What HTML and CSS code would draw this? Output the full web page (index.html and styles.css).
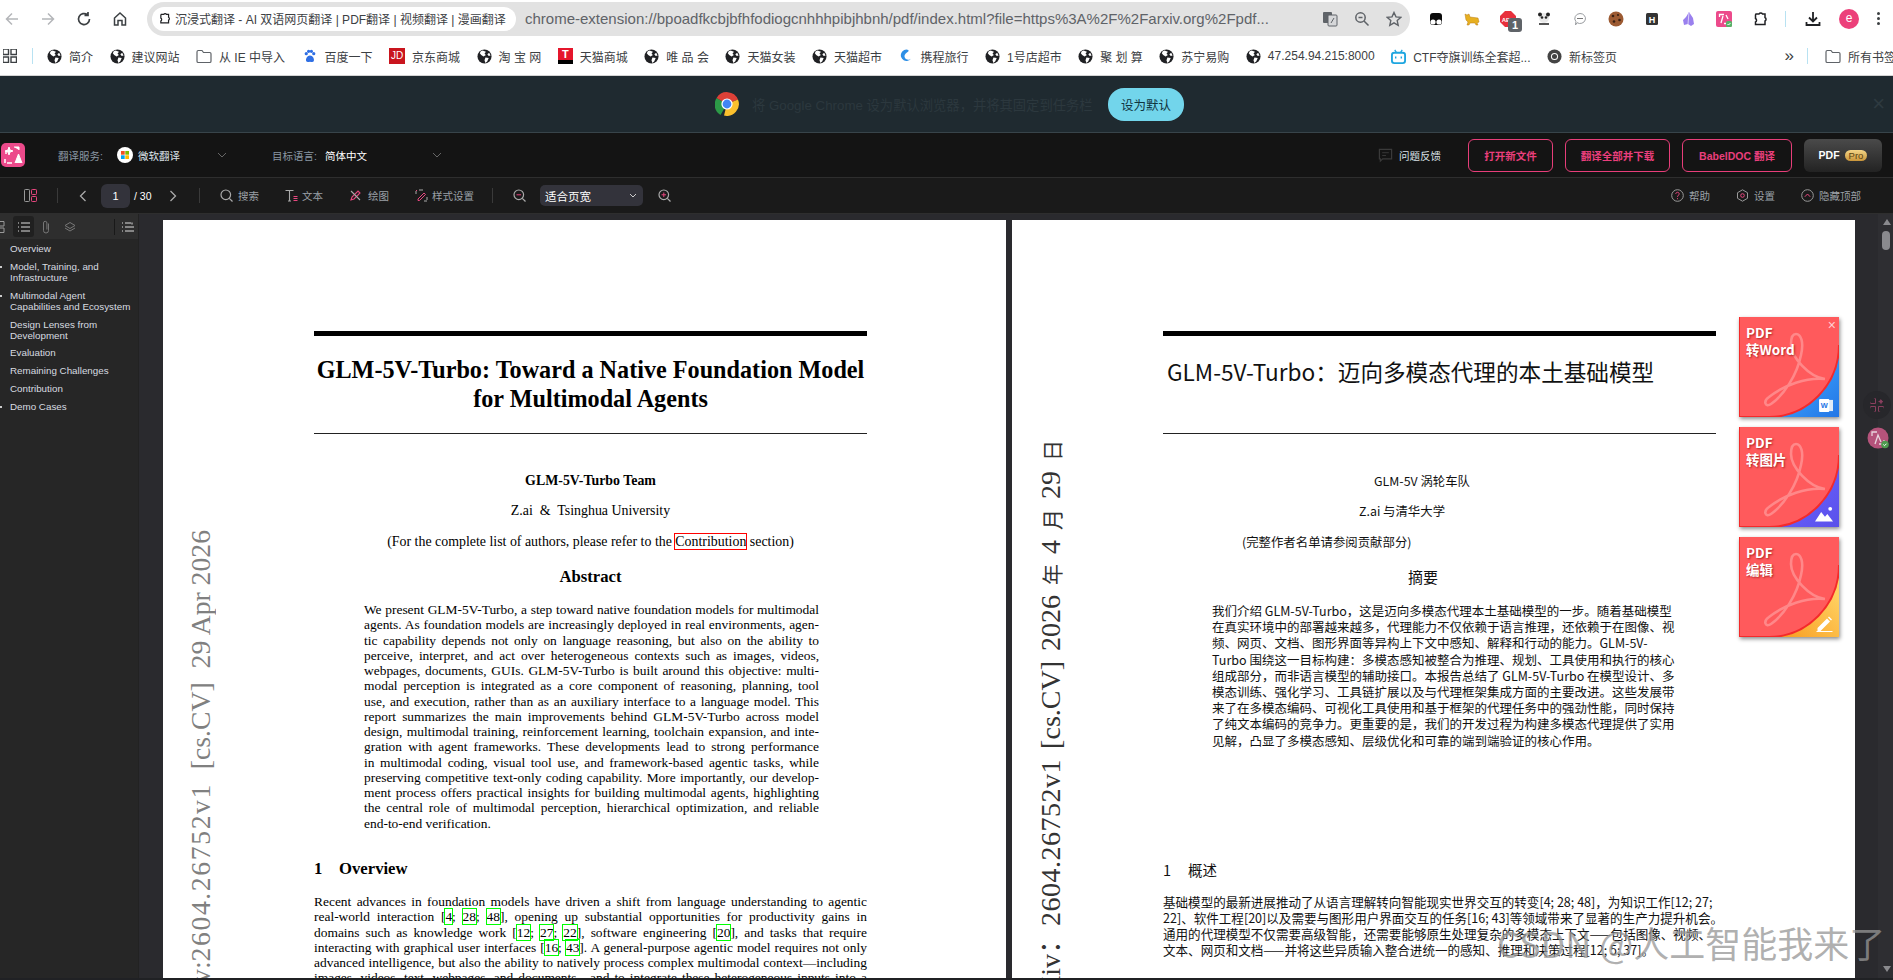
FILE: index.html
```html
<!DOCTYPE html>
<html lang="en">

<head>
    <meta charset="UTF-8">
    <title>沉浸式翻译 - PDF</title>
    <link rel="stylesheet" href="styles.css">
</head>

<body>
    <svg class="defs" width="0" height="0">
        <symbol id="globe" viewBox="0 0 16 16">
            <circle cx="8" cy="8" r="7.5" fill="#202124"/>
            <path d="M6 1.5 9.5 3 8 5 9.5 6.5 7 8 4.500 6.500 3 4.500 4 2.500zM9 9l3.500.5L11 13l-2 2-1-3zM13 4l1.500 3-2 .5-1.500-2z" fill="#fff"/>
        </symbol>
        <symbol id="folder" viewBox="0 0 16 14">
            <path d="M1 2.500C1 1.700 1.500 1 2.300 1H6l1.500 2h6.200c.8 0 1.300.6 1.300 1.300v7.400c0 .8-.5 1.300-1.300 1.300H2.300C1.500 13 1 12.500 1 11.700z" fill="none" stroke="#5f6368" stroke-width="1.200"/>
        </symbol>
        <symbol id="puzzle" viewBox="0 0 16 16">
            <path d="M4 3h3a2 2 0 0 1 3.500 0H13v3.500a2 2 0 0 1 0 3.500V13.500H3.500V11a2 2 0 0 0 0-3.500V4z" fill="none" stroke="#202124" stroke-width="1.500"/>
        </symbol>
        <symbol id="acrobat" viewBox="0 0 100 100">
            <path d="M57 17C62 17 65 25 62 38 58 58 45 78 32 87 26 91 24 84 30 80 45 68 68 60 86 62 70 60 52 40 52 27 52 20 54 17 57 17Z" fill="none" stroke="#fff" stroke-opacity=".28" stroke-width="2.600"/>
        </symbol>
        <symbol id="lobe" viewBox="0 0 100 100">
            <path d="M0 0H100V28C100 68 68 100 30 100H0Z" fill="#ff5a5c"/>
            <path d="M100 28C100 68 68 100 30 100H0V0" fill="none" stroke="#f42a2a" stroke-width="2"/>
        </symbol>
    </svg>

    <div class="tabbar">
        <svg class="nav-ico" viewBox="0 0 16 16"><path d="M14 8H2.500M8 2.500 2.500 8 8 13.500" fill="none" stroke="#b4b6b9" stroke-width="1.500"/></svg>
        <svg class="nav-ico nav-next" viewBox="0 0 16 16"><path d="M2 8h11.500M8 2.500 13.500 8 8 13.500" fill="none" stroke="#b4b6b9" stroke-width="1.500"/></svg>
        <svg class="nav-ico nav-next" viewBox="0 0 16 16"><path d="M13.500 8A5.500 5.500 0 1 1 11.500 3.800M12 1v3.500H8.500" fill="none" stroke="#3c4043" stroke-width="1.700"/></svg>
        <svg class="nav-ico nav-next" viewBox="0 0 16 16"><path d="M2.500 14V7L8 2l5.500 5v7H10V9.500H6V14z" fill="none" stroke="#3c4043" stroke-width="1.500"/></svg>
        <div class="omnibox">
            <div class="site-chip">
                <svg class="chip-ico"><use href="#puzzle"/></svg>
                <span>沉浸式翻译 - AI 双语网页翻译 | PDF翻译 | 视频翻译 | 漫画翻译</span>
            </div>
            <span class="url">chrome-extension://bpoadfkcbjbfhfodiogcnhhhpibjhbnh/pdf/index.html?file=https%3A%2F%2Farxiv.org%2Fpdf...</span>
            <div class="omni-icons">
                <svg viewBox="0 0 16 16"><rect x="1" y="1" width="9" height="11" rx="1" fill="#5f6368"/><rect x="6" y="4" width="9" height="11" rx="1" fill="#d6d7d9" stroke="#5f6368"/><path d="M9 12l3-5" stroke="#5f6368"/></svg>
                <svg viewBox="0 0 16 16"><circle cx="6.500" cy="6.500" r="4.700" fill="none" stroke="#5f6368" stroke-width="1.500"/><path d="M10 10l4.500 4.500M4.500 6.500h4" stroke="#5f6368" stroke-width="1.500"/></svg>
                <svg viewBox="0 0 16 16"><path d="M8 1.500l2 4.400 4.700.5-3.500 3.200 1 4.700L8 11.900l-4.200 2.400 1-4.700L1.300 6.400 6 5.900z" fill="none" stroke="#5f6368" stroke-width="1.400"/></svg>
            </div>
        </div>
        <div class="ext-row">
            <svg viewBox="0 0 16 16"><path d="M2 5c0-2 1-3 3-3h6c2 0 3 1 3 3v6c0 2-1 3-3 3H5c-2 0-3-1-3-3z" fill="#0b0b0b"/><circle cx="5" cy="11" r="2.600" fill="#fff"/><circle cx="11" cy="11" r="2.600" fill="#fff"/></svg>
            <svg viewBox="0 0 16 16"><path d="M1 3l2 1 2-1 1 3 8 1 1 4-2 1 1 2h-2l-1-2H6l-1 2H3l1-3-2-2z" fill="#e7b021" stroke="#b97a12" stroke-width=".5"/></svg>
            <span class="ext-abp">
                <svg viewBox="0 0 16 16"><path d="M5 0h6l5 5v6l-5 5H5l-5-5V5z" fill="#e8303c"/><text x="8" y="10.500" font-size="6" font-weight="700" text-anchor="middle" fill="#fff" font-family="Liberation Sans">ABP</text></svg>
                <span class="ext-badge">1</span>
            </span>
            <svg viewBox="0 0 16 16"><circle cx="8" cy="7" r="5" fill="#e8e8e8"/><circle cx="4" cy="3.500" r="2" fill="#222"/><circle cx="12" cy="3.500" r="2" fill="#222"/><circle cx="6" cy="6.500" r="1.300" fill="#222"/><circle cx="10" cy="6.500" r="1.300" fill="#222"/><rect x="3" y="12" width="10" height="2" fill="#555"/></svg>
            <svg viewBox="0 0 16 16"><path d="M8 2.500a5.500 5 0 1 1-3 9.200L3.500 14l.4-3.500A5.500 5 0 0 1 8 2.500z" fill="none" stroke="#9a9da1"/><path d="M5 7.500h6" stroke="#777"/></svg>
            <svg viewBox="0 0 16 16"><circle cx="8" cy="8" r="7.500" fill="#9c5a32"/><circle cx="5" cy="5" r="1.300" fill="#3a2012"/><circle cx="10" cy="4" r="1.100" fill="#3a2012"/><circle cx="11.500" cy="9" r="1.300" fill="#3a2012"/><circle cx="6" cy="10.500" r="1.300" fill="#3a2012"/></svg>
            <svg viewBox="0 0 16 16"><rect x="2" y="2" width="12" height="12" rx="1.500" fill="#333"/><text x="8" y="11.500" font-size="9" font-weight="700" text-anchor="middle" fill="#fff" font-family="Liberation Sans">H</text></svg>
            <svg viewBox="0 0 16 16"><path d="M9 1l4 6 1 6-3 2-3-2-4 1-1-5 3-3z" fill="#9a80ee"/><path d="M9 1 8 13" stroke="#d9d0fa"/></svg>
            <span class="ext-imt">
                <svg viewBox="0 0 16 16"><rect width="16" height="16" rx="2" fill="#ec4a8b"/><path d="M3.500 6V3.500H8M12.500 10v2.500H8M5 12l2-7M10 4l2 4" fill="none" stroke="#fff" stroke-width="1.300"/><rect x="10" y="10" width="6" height="6" rx="1.500" fill="#58b368"/><path d="M11.500 13l1 1 2-2" fill="none" stroke="#fff"/></svg>
            </span>
            <svg viewBox="0 0 16 16"><use href="#puzzle"/></svg>
            <i class="ext-sep"></i>
            <svg viewBox="0 0 16 16"><path d="M8 1v9M4 6.500 8 10.500 12 6.500M1.500 11v3h13v-3" fill="none" stroke="#202124" stroke-width="1.800"/></svg>
            <span class="avatar">e</span>
            <span class="dots"><i></i><i></i><i></i></span>
        </div>
    </div>

    <div class="bookmarks">
        <svg class="bm-apps" viewBox="0 0 14 14"><path d="M0 0h5.500v5.500H0zM8 0h5.500v5.500H8zM0 8h5.500v5.500H0zM8 8h5.500v5.500H8z" fill="none" stroke="#3c4043" stroke-width="1.400"/></svg>
        <i class="bm-sep"></i>
        <a class="bm"><svg><use href="#globe"/></svg>简介</a>
        <a class="bm"><svg><use href="#globe"/></svg>建议网站</a>
        <a class="bm"><svg class="bm-wide"><use href="#folder"/></svg>从 IE 中导入</a>
        <a class="bm"><svg class="bm-wide" viewBox="0 0 16 16"><circle cx="4" cy="5" r="1.700" fill="#2f6fe4"/><circle cx="12" cy="5" r="1.700" fill="#2f6fe4"/><circle cx="6.500" cy="2.500" r="1.700" fill="#2f6fe4"/><circle cx="9.500" cy="2.500" r="1.700" fill="#2f6fe4"/><path d="M8 7c3 0 5 4 4 6-1 1.500-3 .5-4 .5s-3 1-4-.5c-1-2 1-6 4-6z" fill="#2f6fe4"/></svg>百度一下</a>
        <a class="bm"><span class="bm-jd">JD</span>京东商城</a>
        <a class="bm"><svg><use href="#globe"/></svg>淘 宝 网</a>
        <a class="bm"><span class="bm-tm">T</span>天猫商城</a>
        <a class="bm"><svg><use href="#globe"/></svg>唯 品 会</a>
        <a class="bm"><svg><use href="#globe"/></svg>天猫女装</a>
        <a class="bm"><svg><use href="#globe"/></svg>天猫超市</a>
        <a class="bm"><svg viewBox="0 0 16 16"><path d="M11 1a6 6 0 1 0 3 9c-1 1-3 2-5 1-2-1-3-4-1-6s4-2 3-4z" fill="#2d8fe6"/></svg>携程旅行</a>
        <a class="bm"><svg><use href="#globe"/></svg>1号店超市</a>
        <a class="bm"><svg><use href="#globe"/></svg>聚 划 算</a>
        <a class="bm"><svg><use href="#globe"/></svg>苏宁易购</a>
        <a class="bm"><svg><use href="#globe"/></svg>47.254.94.215:8000</a>
        <a class="bm"><svg viewBox="0 0 16 16"><path d="M4 1l2 3M12 1l-2 3" stroke="#1ea6e0" stroke-width="1.400"/><rect x="1" y="4" width="14" height="11" rx="2.500" fill="none" stroke="#1ea6e0" stroke-width="2"/><path d="M5 8v2M11 8v2" stroke="#1ea6e0" stroke-width="1.500"/></svg>CTF夺旗训练全套超...</a>
        <a class="bm"><svg viewBox="0 0 16 16"><circle cx="8" cy="8" r="7.500" fill="#444"/><circle cx="8" cy="8" r="3.800" fill="#fff"/><circle cx="8" cy="8" r="2.700" fill="#444"/></svg>新标签页</a>
        <span class="bm-more">»</span>
        <i class="bm-sep bm-sep-end"></i>
        <a class="bm bm-all"><svg class="bm-wide"><use href="#folder"/></svg>所有书签</a>
    </div>

    <div class="infobar">
        <svg class="chrome-logo" viewBox="0 0 24 24">
            <path d="M12 12 5.500 23A12 12 0 0 1 1.600 6z" fill="#2c9a47"/>
            <path d="M12 12 1.600 6A12 12 0 0 1 23 7.500z" fill="#dd4037"/>
            <path d="M12 12 23 7.500A12 12 0 0 1 9 23.600z" fill="#fbc02d"/>
            <circle cx="12" cy="12" r="5.600" fill="#fff"/>
            <circle cx="12" cy="12" r="4.400" fill="#4285f4"/>
        </svg>
        <span class="info-text">将 Google Chrome 设为默认浏览器，并将其固定到任务栏</span>
        <button class="info-btn">设为默认</button>
        <span class="info-close">×</span>
    </div>

    <div class="toolbar-top">
        <svg class="imt-logo" viewBox="0 0 24 24"><rect width="24" height="24" rx="5" fill="#ec4a8b"/><path d="M5 11V8M4 20v-4M11 20H6" fill="none" stroke="#fff" stroke-width="1.500"/><path d="M8 4l1 3 3 1-3 1-1 3-1-3-3-1 3-1zM14 20l3.500-9 3.500 9M15.200 17h4.600M13 4h5v3" fill="#fff" stroke="#fff" stroke-width="1"/></svg>
        <span class="svc-label">翻译服务:</span>
        <svg class="ms-badge" viewBox="0 0 16 16"><circle cx="8" cy="8" r="8" fill="#fff"/><rect x="4" y="4" width="3.700" height="3.700" fill="#f25022"/><rect x="8.300" y="4" width="3.700" height="3.700" fill="#7fba00"/><rect x="4" y="8.300" width="3.700" height="3.700" fill="#00a4ef"/><rect x="8.300" y="8.300" width="3.700" height="3.700" fill="#ffb900"/></svg>
        <span class="svc-name">微软翻译</span>
        <svg class="chev chev-a" viewBox="0 0 10 6"><path d="M1 1l4 4 4-4" fill="none" stroke="#666" stroke-width="1"/></svg>
        <span class="svc-label svc-label-b">目标语言:</span>
        <span class="svc-value">简体中文</span>
        <svg class="chev chev-b" viewBox="0 0 10 6"><path d="M1 1l4 4 4-4" fill="none" stroke="#666" stroke-width="1"/></svg>

        <div class="top-right">
            <svg class="fb-ico" viewBox="0 0 16 16"><path d="M1.500 1.500h13v10H5l-2.500 2.500v-2.500h-1z" fill="none" stroke="#3a3a3a" stroke-width="1.300"/><path d="M4.500 5h7M4.500 8h4" stroke="#3a3a3a"/></svg>
            <span class="fb-text">问题反馈</span>
            <button class="pink-btn btn-open">打开新文件</button>
            <button class="pink-btn btn-all">翻译全部并下载</button>
            <button class="pink-btn btn-babel">BabelDOC 翻译</button>
            <div class="pro-btn">PDF <span class="pro-tag">Pro</span></div>
        </div>
    </div>

    <div class="toolbar-pdf">
        <svg class="t-ico t-layout" viewBox="0 0 13 13"><rect x=".5" y=".5" width="5" height="12" rx=".8" fill="none" stroke="#999"/><rect x="7.500" y=".5" width="5" height="5" rx=".8" fill="none" stroke="#e8477f"/><rect x="7.500" y="7.500" width="5" height="5" rx=".8" fill="none" stroke="#e8477f"/></svg>
        <i class="t-sep t-sep-a"></i>
        <svg class="t-arrow t-prev" viewBox="0 0 8 12"><path d="M6.500 1 1.500 6l5 5" fill="none" stroke="#aaa" stroke-width="1.300"/></svg>
        <span class="page-box">1</span>
        <span class="page-total">/ 30</span>
        <svg class="t-arrow t-next" viewBox="0 0 8 12"><path d="M1.500 1l5 5-5 5" fill="none" stroke="#aaa" stroke-width="1.300"/></svg>
        <i class="t-sep t-sep-b"></i>

        <svg class="t-ico t-search" viewBox="0 0 13 13"><circle cx="5.800" cy="5.800" r="4.800" fill="none" stroke="#aaa" stroke-width="1.200"/><path d="M9.300 9.300 12.500 12.500" stroke="#aaa" stroke-width="1.200"/></svg>
        <span class="t-text t-text-a">搜索</span>
        <svg class="t-ico t-tool" viewBox="0 0 13 13"><path d="M.5 1.500h8M4.500 1.500V12M3 12h3" fill="none" stroke="#aaa" stroke-width="1.100"/><path d="M8.500 7.500h4M8.500 9.500h4M8.500 11.500h4" stroke="#e8477f" stroke-width="1"/></svg>
        <span class="t-text t-text-b">文本</span>
        <svg class="t-ico t-tool" viewBox="0 0 13 13"><path d="M2 11l1-3 6-6 2 2-6 6z" fill="none" stroke="#e8477f" stroke-width="1.100"/><path d="M2 2l9 9" stroke="#aaa" stroke-width="1.100"/></svg>
        <span class="t-text t-text-c">绘图</span>
        <svg class="t-ico t-tool" viewBox="0 0 13 13"><path d="M1 5V2M12 8v3M9 12h3M4 1h4" fill="none" stroke="#aaa"/><path d="M3 10l6-6 1.500 1.500-6 6H3zM1 1l1 1" fill="none" stroke="#e8477f"/></svg>
        <span class="t-text t-text-b">样式设置</span>
        <i class="t-sep t-sep-c"></i>
        <svg class="t-ico t-zoom-out" viewBox="0 0 13 13"><circle cx="5.800" cy="5.800" r="4.800" fill="none" stroke="#aaa" stroke-width="1.200"/><path d="M9.300 9.300 12.500 12.500" stroke="#aaa" stroke-width="1.200"/><path d="M3.500 5.800h4.600" stroke="#e8477f"/></svg>
        <div class="zoom-select">适合页宽<svg viewBox="0 0 8 5"><path d="M1 1l3 3 3-3" fill="none" stroke="#ccc"/></svg></div>
        <svg class="t-ico t-zoom-in" viewBox="0 0 13 13"><circle cx="5.800" cy="5.800" r="4.800" fill="none" stroke="#aaa" stroke-width="1.200"/><path d="M9.300 9.300 12.500 12.500" stroke="#aaa" stroke-width="1.200"/><path d="M3.500 5.800h4.600M5.800 3.500v4.600" stroke="#e8477f"/></svg>

        <div class="pdf-right">
            <span class="r-item"><svg viewBox="0 0 13 13"><circle cx="6.500" cy="6.500" r="5.800" fill="none" stroke="#999"/><path d="M4.800 5c0-2.300 3.400-2.300 3.400 0 0 1.300-1.700 1.300-1.700 2.800M6.500 9.200v1" fill="none" stroke="#e8477f"/></svg>帮助</span>
            <span class="r-item"><svg viewBox="0 0 13 13"><path d="M6.500.8l5 2.900v5.600l-5 2.900-5-2.900V3.700z" fill="none" stroke="#999"/><circle cx="6.500" cy="6.500" r="1.800" fill="none" stroke="#e8477f"/></svg>设置</span>
            <span class="r-item"><svg viewBox="0 0 13 13"><circle cx="6.500" cy="6.500" r="5.800" fill="none" stroke="#999"/><path d="M3.800 7.800 6.500 5l2.700 2.800" fill="none" stroke="#e8477f"/></svg>隐藏顶部</span>
        </div>
    </div>

    <div class="viewer">
        <aside class="sidebar">
            <div class="side-tools">
                <svg class="side-thumbs" viewBox="0 0 6 12"><path d="M-3 .5h7v4.500h-7zM-3 7h7v4.500h-7z" fill="none" stroke="#999"/></svg>
                <span class="side-active"><svg viewBox="0 0 12 10"><path d="M0 1h1M3 1h9M0 5h1M3 5h9M0 9h1M3 9h9" stroke="#ddd"/></svg></span>
                <svg class="side-clip" viewBox="0 0 10 14"><path d="M7.500 3.500v7a2.500 2.500 0 0 1-5 0V3a1.700 1.700 0 0 1 3.400 0v6.500" fill="none" stroke="#777"/></svg>
                <svg class="side-layers" viewBox="0 0 12 10"><path d="M6 .5l5 3-5 3-5-3zM1 6l5 3 5-3" fill="none" stroke="#777"/></svg>
                <i class="side-sep"></i>
                <svg class="side-tune" viewBox="0 0 12 10"><path d="M0 1h1M3 1h6M0 5h1M3 5h9M0 9h1M3 9h9M10 .5v2" stroke="#ddd"/></svg>
            </div>
            <ul class="outline">
                <li>Overview</li>
                <li class="has-kids two-line">Model, Training, and<br>Infrastructure</li>
                <li class="has-kids two-line">Multimodal Agent<br>Capabilities and Ecosystem</li>
                <li class="two-line">Design Lenses from<br>Development</li>
                <li>Evaluation</li>
                <li>Remaining Challenges</li>
                <li>Contribution</li>
                <li class="has-kids">Demo Cases</li>
            </ul>
        </aside>

        <main class="pages">
            <section class="page page-en">
                <div class="stamp">arXiv:<span class="stamp-id">2604.26752v1</span>  [cs.CV]  29 Apr 2026</div>
                <hr class="rule-thick">
                <h1 class="title">GLM-5V-Turbo: Toward a Native Foundation Model<br>for Multimodal Agents</h1>
                <hr class="rule-thin">
                <p class="team"><b>GLM-5V-Turbo Team</b></p>
                <p class="aff">Z.ai &nbsp;&amp;&nbsp; Tsinghua University</p>
                <p class="note">(For the complete list of authors, please refer to the <span class="lnk-red">Contribution</span> section)</p>
                <h2 class="abs-head">Abstract</h2>
                <div class="abs-body">
                    <span class="jl">We present GLM-5V-Turbo, a step toward native foundation models for multimodal</span>
                    <span class="jl">agents. As foundation models are increasingly deployed in real environments, agen-</span>
                    <span class="jl">tic capability depends not only on language reasoning, but also on the ability to</span>
                    <span class="jl">perceive, interpret, and act over heterogeneous contexts such as images, videos,</span>
                    <span class="jl">webpages, documents, GUIs. GLM-5V-Turbo is built around this objective: multi-</span>
                    <span class="jl">modal perception is integrated as a core component of reasoning, planning, tool</span>
                    <span class="jl">use, and execution, rather than as an auxiliary interface to a language model. This</span>
                    <span class="jl">report summarizes the main improvements behind GLM-5V-Turbo across model</span>
                    <span class="jl">design, multimodal training, reinforcement learning, toolchain expansion, and inte-</span>
                    <span class="jl">gration with agent frameworks. These developments lead to strong performance</span>
                    <span class="jl">in multimodal coding, visual tool use, and framework-based agentic tasks, while</span>
                    <span class="jl">preserving competitive text-only coding capability. More importantly, our develop-</span>
                    <span class="jl">ment process offers practical insights for building multimodal agents, highlighting</span>
                    <span class="jl">the central role of multimodal perception, hierarchical optimization, and reliable</span>
                    <span class="jl jl-end">end-to-end verification.</span>
                </div>
                <h2 class="sec-head"><span class="sec-num">1</span>Overview</h2>
                <div class="sec-body">
                    <span class="jl">Recent advances in foundation models have driven a shift from language understanding to agentic</span>
                    <span class="jl">real-world interaction [<a class="cite">4</a>; <a class="cite">28</a>; <a class="cite">48</a>], opening up substantial opportunities for productivity gains in</span>
                    <span class="jl">domains such as knowledge work [<a class="cite">12</a>; <a class="cite">27</a>; <a class="cite">22</a>], software engineering [<a class="cite">20</a>], and tasks that require</span>
                    <span class="jl">interacting with graphical user interfaces [<a class="cite">16</a>; <a class="cite">43</a>]. A general-purpose agentic model requires not only</span>
                    <span class="jl">advanced intelligence, but also the ability to natively process complex multimodal context—including</span>
                    <span class="jl">images, videos, text, webpages, and documents—and to integrate these heterogeneous inputs into a</span>
                </div>
            </section>

            <section class="page page-zh">
                <div class="stamp stamp-zh">arXiv：<span class="stamp-id-zh">2604.26752v1</span> [cs.CV] 2026 <span class="stamp-cjk">年</span> 4 <span class="stamp-cjk">月</span> 29 <span class="stamp-cjk">日</span></div>
                <hr class="rule-thick">
                <h1 class="zh-title">GLM-5V-Turbo：迈向多模态代理的本土基础模型</h1>
                <hr class="rule-thin rule-zh">
                <p class="zh-team">GLM-5V 涡轮车队</p>
                <p class="zh-aff">Z.ai 与清华大学</p>
                <p class="zh-note">(完整作者名单请参阅贡献部分)</p>
                <h2 class="zh-abs-head">摘要</h2>
                <div class="zh-abs">
                    <span>我们介绍 GLM-5V-Turbo，这是迈向多模态代理本土基础模型的一步。随着基础模型</span>
                    <span>在真实环境中的部署越来越多，代理能力不仅依赖于语言推理，还依赖于在图像、视</span>
                    <span>频、网页、文档、图形界面等异构上下文中感知、解释和行动的能力。GLM-5V-</span>
                    <span>Turbo 围绕这一目标构建：多模态感知被整合为推理、规划、工具使用和执行的核心</span>
                    <span>组成部分，而非语言模型的辅助接口。本报告总结了 GLM-5V-Turbo 在模型设计、多</span>
                    <span>模态训练、强化学习、工具链扩展以及与代理框架集成方面的主要改进。这些发展带</span>
                    <span>来了在多模态编码、可视化工具使用和基于框架的代理任务中的强劲性能，同时保持</span>
                    <span>了纯文本编码的竞争力。更重要的是，我们的开发过程为构建多模态代理提供了实用</span>
                    <span>见解，凸显了多模态感知、层级优化和可靠的端到端验证的核心作用。</span>
                </div>
                <h2 class="zh-sec-head"><span class="sec-num">1</span>概述</h2>
                <div class="zh-sec-body">
                    <span>基础模型的最新进展推动了从语言理解转向智能现实世界交互的转变[4; 28; 48]，为知识工作[12; 27;</span>
                    <span>22]、软件工程[20]以及需要与图形用户界面交互的任务[16; 43]等领域带来了显著的生产力提升机会。</span>
                    <span>通用的代理模型不仅需要高级智能，还需要能够原生处理复杂的多模态上下文——包括图像、视频、</span>
                    <span>文本、网页和文档——并将这些异质输入整合进统一的感知、推理和决策过程[12; 5; 37]。</span>
                </div>
            </section>
        </main>

        <div class="scrollbar">
            <i class="sb-up"></i>
            <i class="sb-thumb"></i>
            <i class="sb-down"></i>
        </div>

        <!-- floating stuff over the pages -->
        <div class="promos">
            <div class="promo">
                <svg class="promo-bg" viewBox="0 0 100 100"><defs><linearGradient id="gb" x1="0" y1="0" x2="1" y2="1"><stop offset=".5" stop-color="#3fa8ff"/><stop offset="1" stop-color="#2376e6"/></linearGradient></defs><rect width="100" height="100" fill="url(#gb)"/><use href="#lobe"/><use href="#acrobat"/></svg>
                <span class="promo-text">PDF<br>转Word</span>
                <span class="promo-x">×</span>
                <svg class="promo-ico" viewBox="0 0 16 14"><rect x="9" y="1" width="6" height="12" fill="#dfeaf8"/><rect x="0" y="0" width="11" height="14" rx="1" fill="#fff"/><text x="5.500" y="10" font-size="8" font-weight="700" text-anchor="middle" fill="#2376e6" font-family="Liberation Sans">W</text></svg>
            </div>
            <div class="promo">
                <svg class="promo-bg" viewBox="0 0 100 100"><defs><linearGradient id="gp" x1="0" y1="0" x2="1" y2="1"><stop offset=".5" stop-color="#6a62ff"/><stop offset="1" stop-color="#5a50ea"/></linearGradient></defs><rect width="100" height="100" fill="url(#gp)"/><use href="#lobe"/><use href="#acrobat"/></svg>
                <span class="promo-text">PDF<br>转图片</span>
                <svg class="promo-ico promo-ico-big" viewBox="0 0 20 16"><circle cx="16" cy="2.500" r="2" fill="#fff"/><path d="M0 16 6.500 6l4 5 2.500-3 6 8z" fill="#fff"/></svg>
            </div>
            <div class="promo">
                <svg class="promo-bg" viewBox="0 0 100 100"><defs><linearGradient id="go" x1="1" y1="0" x2="0" y2="1"><stop offset=".3" stop-color="#ffd060"/><stop offset=".85" stop-color="#f7971a"/></linearGradient></defs><rect width="100" height="100" fill="url(#go)"/><use href="#lobe"/><use href="#acrobat"/></svg>
                <span class="promo-text">PDF<br>编辑</span>
                <svg class="promo-ico promo-ico-big" viewBox="0 0 16 16"><path d="M1 12 10.500 2.500l3 3L4 15H1zM11.500 1.500l1-1 3 3-1 1z" fill="#fff"/><rect x="0" y="15" width="16" height="1.200" fill="#fff"/></svg>
            </div>
        </div>

        <svg class="float-grid" viewBox="0 0 14 14"><path d="M.5.5h5v5h-5zM.5 8.500h5v5h-5zM8.500 8.500h5v5h-5z" fill="none" stroke="#8a3f5e"/><path d="M11 .5l1 2 2 1-2 1-1 2-1-2-2-1 2-1z" fill="#8a3f5e"/></svg>
        <div class="float-imt">
            <svg viewBox="0 0 22 22"><circle cx="11" cy="11" r="10.500" fill="#b5537b"/><path d="M5 9V5h5M17 13v4h-5M8 17l3-9 3 7" fill="none" stroke="#e9d5de" stroke-width="1.300"/><circle cx="18" cy="17.500" r="3.800" fill="#4e9b4f"/><path d="M16.300 17.500l1.200 1.200 2-2" fill="none" stroke="#fff"/></svg>
        </div>

        <div class="watermark">CSDN @人工智能我来了</div>
    </div>
</body>

</html>
```

FILE: styles.css
```css
* {
    box-sizing: border-box;
}
html,
body {
    margin: 0;
    height: 100%;
    overflow: hidden;
}
body {
    display: flex;
    flex-direction: column;
    font-family: "Liberation Sans", "Noto Sans CJK SC", sans-serif;
    background: #202124;
}
p,
h1,
h2 {
    margin: 0;
    font-weight: 400;
}
.defs {
    position: absolute;
}
button {
    font-family: inherit;
    cursor: pointer;
}

/* browser chrome */
.tabbar {
    display: flex;
    align-items: center;
    height: 37px;
    padding-left: 4px;
    background: #fff;
}
.nav-ico {
    width: 16px;
    height: 16px;
}
.nav-next {
    margin-left: 20px;
}
.omnibox {
    display: flex;
    align-items: center;
    width: 1263px;
    height: 34px;
    margin-left: 19px;
    padding-left: 5px;
    background: #e2e2e2;
    border-radius: 17px;
}
.site-chip {
    display: flex;
    align-items: center;
    gap: 4px;
    width: 364px;
    height: 24px;
    padding-left: 6px;
    background: #fff;
    border-radius: 12px;
    font-size: 12px;
    color: #3c4043;
    white-space: nowrap;
}
.chip-ico {
    width: 13px;
    height: 13px;
    flex: none;
}
.url {
    margin-left: 9px;
    width: 771px;
    font-size: 15px;
    color: #5f6368;
    white-space: nowrap;
}
.omni-icons {
    display: flex;
    gap: 16px;
    margin-left: 26px;
}
.omni-icons svg {
    width: 16px;
    height: 16px;
}
.ext-row {
    display: flex;
    align-items: center;
    gap: 20px;
    margin-left: 18px;
}
.ext-row > svg,
.ext-row > span > svg {
    display: block;
    width: 16px;
    height: 16px;
}
.ext-abp {
    position: relative;
}
.ext-badge {
    position: absolute;
    left: 8px;
    top: 7px;
    width: 14px;
    height: 14px;
    background: #5f6368;
    border-radius: 3px;
    color: #fff;
    font-size: 11px;
    font-weight: 700;
    line-height: 14px;
    text-align: center;
}
.ext-sep {
    width: 1px;
    height: 16px;
    margin: 0 -1px 0 -3px;
    background: #b8e2f2;
}
.avatar {
    display: block;
    width: 20px;
    height: 20px;
    margin: 0 -2px 0 -2px;
    background: #ec407a;
    border-radius: 50%;
    color: #fff;
    font-size: 12px;
    line-height: 19px;
    text-align: center;
}
.dots {
    display: flex;
    flex-direction: column;
    gap: 2px;
}
.dots i {
    width: 3px;
    height: 3px;
    background: #3c4043;
    border-radius: 50%;
}

.bookmarks {
    display: flex;
    align-items: center;
    gap: 16.500px;
    height: 39px;
    padding-left: 3px;
    background: #fff;
    border-bottom: 1px solid #d4d4d4;
    font-size: 12px;
    color: #3c4043;
    white-space: nowrap;
    overflow: hidden;
}
.bm-apps {
    width: 14px;
    height: 14px;
}
.bm-sep {
    width: 1px;
    height: 16px;
    margin: 0 -2px;
    background: #b8e2f2;
}
.bm {
    display: flex;
    align-items: center;
    gap: 7px;
    flex: none;
}
.bm svg {
    width: 15px;
    height: 15px;
    flex: none;
}
.bm .bm-wide {
    width: 16px;
}
.bm-jd {
    width: 16px;
    height: 16px;
    background: #c9151e;
    color: #fff;
    font-size: 10px;
    line-height: 16px;
    text-align: center;
}
.bm-tm {
    width: 15px;
    height: 16px;
    background: linear-gradient(#e5162c 75%, #000 75%);
    color: #fff;
    font-size: 11px;
    font-weight: 700;
    line-height: 13px;
    text-align: center;
}
.bm-more {
    margin-left: auto;
    font-size: 17px;
    line-height: 16px;
}
.bm-sep-end {
    margin: 0 0 0 -3px;
}
.bm-all {
    margin-right: -3px;
}

/* infobar */
.infobar {
    display: flex;
    align-items: center;
    height: 57px;
    padding-left: 715px;
    background: #1f2a30;
    border-bottom: 1px solid #38444a;
}
.chrome-logo {
    width: 24px;
    height: 24px;
}
.info-text {
    width: 356px;
    margin-left: 13px;
    font-size: 13.300px;
    color: #2c383e;
    white-space: nowrap;
}
.info-btn {
    width: 76px;
    height: 33px;
    background: #72d5eb;
    border: 0;
    border-radius: 16px;
    color: #10343e;
    font-size: 12.500px;
}
.info-close {
    margin-left: auto;
    margin-right: 8px;
    font-size: 22px;
    color: #2e3a40;
}

/* translate toolbar */
.toolbar-top {
    display: flex;
    align-items: center;
    height: 45px;
    padding-left: 1px;
    background: #141414;
    border-bottom: 1px solid #2e2e2e;
    font-size: 10.500px;
    white-space: nowrap;
}
.imt-logo {
    width: 24px;
    height: 24px;
}
.svc-label {
    margin-left: 33px;
    width: 47px;
    color: #8a97a3;
}
.svc-label-b {
    margin-left: 45px;
}
.ms-badge {
    width: 16px;
    height: 16px;
    margin-left: 12px;
}
.svc-name {
    margin-left: 5px;
    width: 42px;
    color: #dce3ea;
}
.svc-value {
    margin-left: 6px;
    width: 43px;
    color: #fff;
}
.chev {
    width: 10px;
    height: 6px;
}
.chev-a {
    margin-left: 37px;
}
.chev-b {
    margin-left: 64px;
}
.top-right {
    display: flex;
    align-items: center;
    margin-left: auto;
    padding-right: 11px;
}
.fb-ico {
    width: 15px;
    height: 15px;
}
.fb-text {
    margin-left: 6px;
    width: 43px;
    color: #dbe2e8;
}
.pink-btn {
    height: 33px;
    margin-left: 12px;
    background: transparent;
    border: 1px solid #e83e7a;
    border-radius: 6px;
    color: #ea3f7c;
    font-size: 10.500px;
    font-weight: 700;
    padding: 0;
}
.btn-open {
    width: 85px;
    margin-left: 26px;
}
.btn-all {
    width: 105px;
}
.btn-babel {
    width: 110px;
}
.pro-btn {
    display: flex;
    align-items: center;
    justify-content: center;
    gap: 5px;
    width: 78px;
    height: 33px;
    margin-left: 12px;
    background: linear-gradient(#4a4a4a, #232323);
    border-radius: 6px;
    color: #fff;
    font-size: 10.500px;
    font-weight: 700;
}
.pro-tag {
    padding: 0 4px;
    background: linear-gradient(#f3d587, #c9953a);
    border-radius: 6px;
    color: #5a4210;
    font-size: 9.500px;
    font-weight: 400;
    line-height: 11px;
}

/* pdf toolbar */
.toolbar-pdf {
    display: flex;
    align-items: center;
    height: 35px;
    background: #1a1a1a;
    font-size: 10.500px;
    color: #9aa0a6;
    white-space: nowrap;
}
.t-ico {
    width: 13px;
    height: 13px;
    flex: none;
}
.t-layout {
    margin-left: 24px;
}
.t-sep {
    width: 1px;
    height: 15px;
    background: #3a3a3a;
}
.t-sep-a {
    margin-left: 20px;
}
.t-sep-b {
    margin-left: 22px;
}
.t-sep-c {
    margin-left: 18px;
}
.t-arrow {
    width: 8px;
    height: 12px;
}
.t-prev {
    margin-left: 21px;
}
.t-next {
    margin-left: 17px;
}
.page-box {
    width: 29px;
    height: 24px;
    margin-left: 14px;
    background: #33333b;
    border-radius: 6px;
    color: #fff;
    font-size: 11px;
    line-height: 24px;
    text-align: center;
}
.page-total {
    width: 18px;
    margin-left: 4px;
    color: #fff;
    font-size: 10.500px;
}
.t-search {
    margin-left: 20px;
}
.t-tool {
    margin-left: 26px;
}
.t-text-a {
    margin-left: 5px;
}
.t-text-b {
    margin-left: 4px;
}
.t-text-c {
    margin-left: 6px;
}
.t-zoom-out {
    margin-left: 20px;
}
.zoom-select {
    display: flex;
    align-items: center;
    justify-content: space-between;
    width: 103px;
    height: 21px;
    margin-left: 14px;
    padding: 0 6px 0 5px;
    background: #33333b;
    border-radius: 5px;
    color: #fff;
    font-size: 11.500px;
}
.zoom-select svg {
    width: 8px;
    height: 5px;
}
.t-zoom-in {
    margin-left: 15px;
}
.pdf-right {
    display: flex;
    gap: 26px;
    margin-left: auto;
    padding-right: 32px;
}
.r-item {
    display: flex;
    align-items: center;
    gap: 5px;
}
.r-item svg {
    width: 13px;
    height: 13px;
}

/* viewer */
.viewer {
    position: relative;
    flex: 1;
    display: flex;
    min-height: 0;
    background: #2a2a2e;
    border-top: 1px solid #2e2e2e;
    border-bottom: 2px solid #202124;
}
.sidebar {
    width: 139px;
    flex: none;
    background: #262626;
    border-right: 1px solid #222;
    overflow: hidden;
}
.side-tools {
    display: flex;
    align-items: center;
    height: 25px;
    background: #2e2e2e;
}
.side-tools svg {
    flex: none;
}
.side-thumbs {
    width: 6px;
    height: 12px;
}
.side-active {
    display: flex;
    align-items: center;
    justify-content: center;
    width: 21px;
    height: 21px;
    margin-left: 7px;
    background: #202020;
    border-radius: 3px;
}
.side-active svg {
    width: 12px;
    height: 10px;
}
.side-clip {
    width: 10px;
    height: 14px;
    margin-left: 7px;
}
.side-layers {
    width: 12px;
    height: 10px;
    margin-left: 13px;
}
.side-sep {
    width: 1px;
    height: 16px;
    margin-left: 38px;
    background: #191919;
}
.side-tune {
    width: 12px;
    height: 10px;
    margin-left: 7px;
}
.outline {
    margin: 0;
    padding: 4px 0 0 10px;
    list-style: none;
    font-size: 9.800px;
    line-height: 12px;
    color: #d8dce0;
}
.outline li {
    position: relative;
    margin-bottom: 6px;
}
.outline .two-line {
    line-height: 11.400px;
}
.has-kids::before {
    content: "";
    position: absolute;
    left: -10px;
    top: 5px;
    width: 2px;
    height: 2px;
    background: #ccc;
}

.pages {
    display: flex;
    gap: 6px;
    height: 100%;
    padding: 6px 0 0 24px;
    overflow: hidden;
}
.page {
    position: relative;
    width: 843px;
    flex: none;
    padding-left: 151px;
    background: #fff;
    color: #000;
    overflow: hidden;
}
.page-zh {
    font-family: "Noto Sans CJK SC", sans-serif;
    color: #111;
}
.rule-thick {
    width: 553px;
    height: 5px;
    margin: 111px 0 0;
    background: #000;
    border: 0;
}
.rule-thin {
    width: 553px;
    height: 1px;
    margin: 20px 0 0;
    background: #222;
    border: 0;
}
.rule-zh {
    margin-top: 46px;
}

/* english page */
.page-en {
    font-family: "Liberation Serif", serif;
    font-size: 13.900px;
}
.stamp {
    position: absolute;
    left: 21px;
    top: 310px;
    writing-mode: vertical-rl;
    text-orientation: sideways;
    transform: rotate(180deg);
    font-family: "Liberation Serif", "Noto Sans CJK SC", serif;
    font-size: 27.700px;
    line-height: 34px;
    color: #808080;
    white-space: pre;
}
.stamp-id {
    letter-spacing: 1.600px;
}
.stamp-zh {
    left: 22px;
    top: 220px;
    color: #333;
    font-size: 28px;
    word-spacing: 3px;
}
.stamp-id-zh {
    letter-spacing: .5px;
}
.stamp-cjk {
    font-size: 21px;
}
.title {
    width: 553px;
    margin-top: 20px;
    font-size: 24.200px;
    font-weight: 700;
    line-height: 28.500px;
    text-align: center;
    white-space: nowrap;
}
.team,
.aff,
.note {
    width: 553px;
    line-height: 16px;
    text-align: center;
}
.team {
    margin-top: 39px;
}
.aff {
    margin-top: 14px;
}
.note {
    margin-top: 15px;
}
.lnk-red {
    outline: 1px solid #f00;
}
.abs-head {
    width: 553px;
    margin-top: 17px;
    font-size: 16.700px;
    font-weight: 700;
    line-height: 20px;
    text-align: center;
}
.abs-body {
    width: 455px;
    margin: 15px 0 0 50px;
    font-size: 13.450px;
    line-height: 15.250px;
}
.jl {
    display: block;
    text-align: justify;
    text-align-last: justify;
}
.jl-end {
    text-align-last: left;
}
.sec-head {
    margin-top: 28px;
    font-size: 16.700px;
    font-weight: 700;
    line-height: 20px;
}
.sec-num {
    display: inline-block;
    width: 25px;
}
.sec-body {
    width: 553px;
    margin-top: 15.400px;
    font-size: 13.450px;
    line-height: 15.250px;
}
.cite {
    outline: 1px solid #0f0;
}

/* chinese page */
.zh-title {
    margin-top: 21px;
    padding-left: 4px;
    font-size: 22.600px;
    line-height: 30px;
    white-space: nowrap;
}
.zh-team,
.zh-aff,
.zh-note {
    font-size: 12.400px;
    line-height: 16px;
    white-space: nowrap;
}
.zh-team {
    margin: 39px 0 0 211px;
}
.zh-aff {
    margin: 14px 0 0 196px;
}
.zh-note {
    margin: 15px 0 0 79px;
}
.zh-abs-head {
    margin: 17px 0 0 245px;
    font-size: 15px;
    line-height: 20px;
}
.zh-abs {
    margin: 16px 0 0 49px;
    font-size: 12.500px;
    line-height: 16.200px;
    white-space: nowrap;
}
.zh-abs span,
.zh-sec-body span {
    display: block;
}
.zh-sec-head {
    margin-top: 111px;
    font-size: 14.500px;
    line-height: 20px;
}
.zh-sec-body {
    margin-top: 14px;
    font-size: 12.550px;
    line-height: 16.200px;
    white-space: nowrap;
}

/* scrollbar */
.scrollbar {
    position: absolute;
    top: 0;
    right: 0;
    bottom: 0;
    width: 15px;
    background: #2e2e32;
}
.sb-up,
.sb-down {
    position: absolute;
    left: 5px;
    width: 0;
    height: 0;
    border-left: 4px solid transparent;
    border-right: 4px solid transparent;
}
.sb-up {
    top: 5px;
    border-bottom: 6px solid #8a8a8e;
}
.sb-down {
    bottom: 6px;
    border-top: 6px solid #8a8a8e;
}
.sb-thumb {
    position: absolute;
    top: 17px;
    left: 4px;
    width: 8px;
    height: 19px;
    background: #8a8a8e;
    border-radius: 4px;
}

/* promo cards sit on top of the page */
.promos {
    position: absolute;
    top: 103px;
    left: 1739px;
    display: flex;
    flex-direction: column;
    gap: 10px;
}
.promo {
    position: relative;
    width: 100px;
    height: 100px;
    box-shadow: 1px 2px 4px rgba(0, 0, 0, .45);
}
.promo-bg {
    display: block;
    width: 100px;
    height: 100px;
}
.promo-text {
    position: absolute;
    left: 7px;
    top: 7px;
    font-family: "Noto Sans CJK SC", sans-serif;
    font-size: 13.500px;
    font-weight: 700;
    line-height: 17px;
    color: #fff;
    text-shadow: 1px 1px 2px rgba(120, 0, 0, .6);
}
.promo-x {
    position: absolute;
    right: 3px;
    top: 1px;
    font-size: 14px;
    line-height: 14px;
    color: #ffd0d0;
}
.promo-ico {
    position: absolute;
    right: 5px;
    bottom: 5px;
    width: 15px;
    height: 13px;
}
.promo-ico-big {
    right: 5px;
    width: 19px;
    height: 16px;
}

.float-grid {
    position: absolute;
    left: 1870px;
    top: 184px;
    width: 14px;
    height: 14px;
    border-radius: 50%;
    background: #27272b;
    box-shadow: 0 0 0 7px #27272b;
}
.float-imt {
    position: absolute;
    left: 1867px;
    top: 213px;
    width: 22px;
    height: 22px;
}
.float-imt svg {
    display: block;
}

.watermark {
    position: absolute;
    left: 1497px;
    top: 703px;
    font-family: "Noto Sans CJK SC", sans-serif;
    font-size: 36px;
    line-height: 50px;
    color: rgba(150, 150, 150, .75);
    white-space: nowrap;
    pointer-events: none;
}
```
